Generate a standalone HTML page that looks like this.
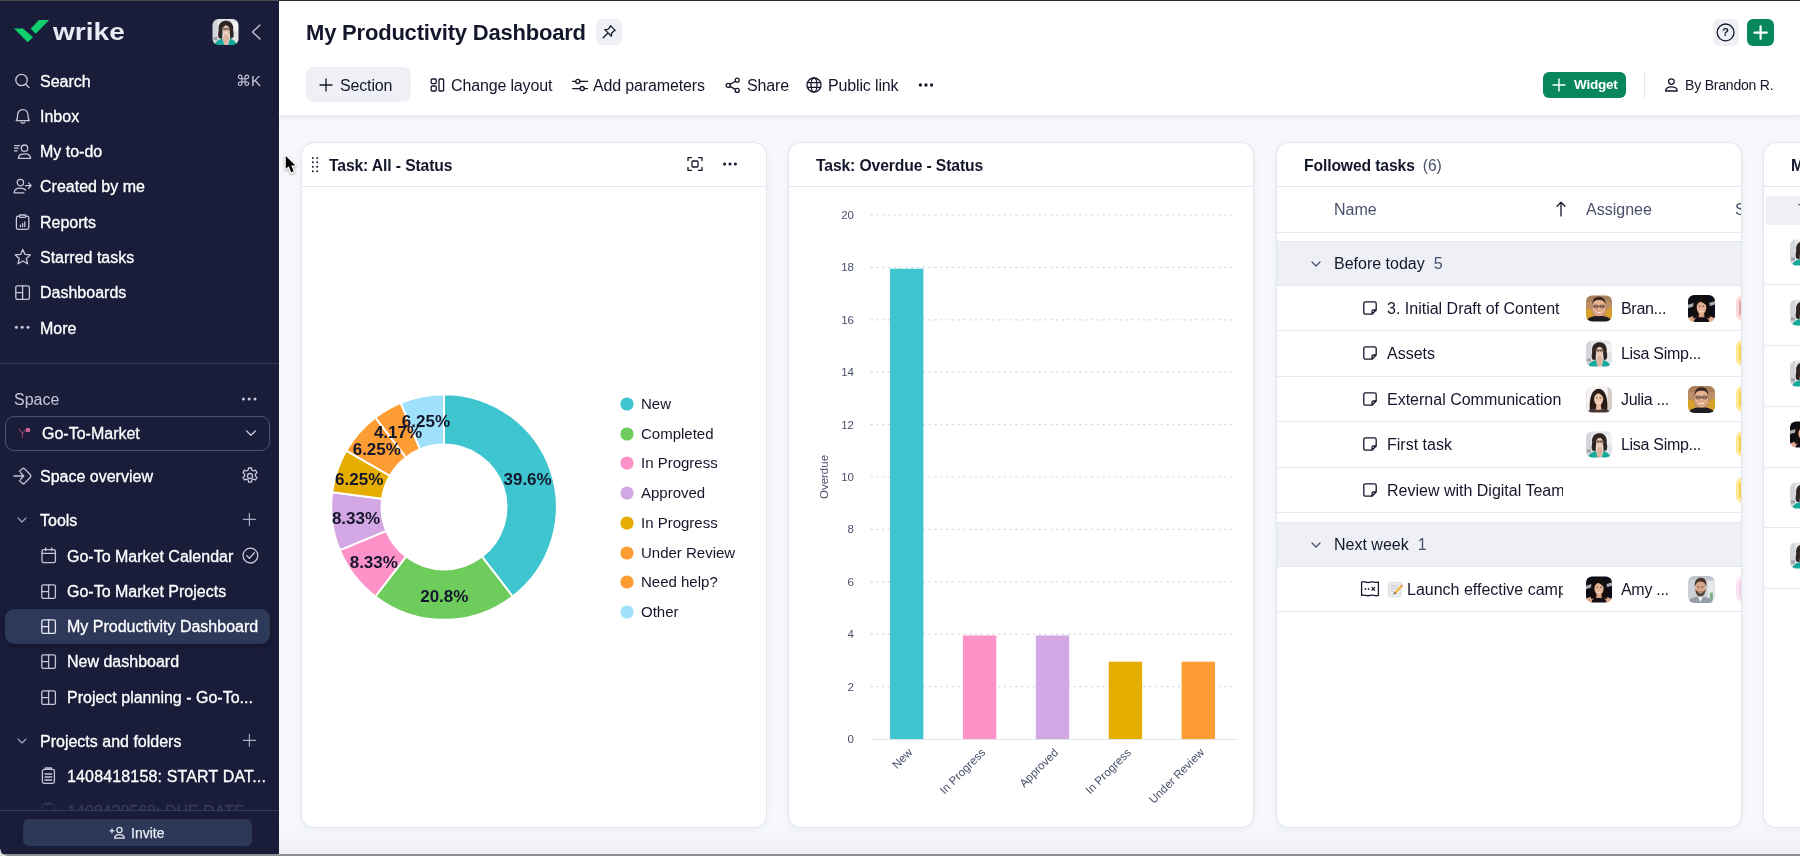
<!DOCTYPE html>
<html lang="en">
<head>
<meta charset="utf-8">
<title>My Productivity Dashboard - Wrike</title>
<style>
*{box-sizing:border-box;margin:0;padding:0}
html,body{width:1800px;height:856px;overflow:hidden;background:#f6f8fb;font-family:"Liberation Sans",sans-serif;color:#14162b}
.abs{position:absolute}
#topline{position:absolute;left:0;top:0;width:1800px;height:1px;background:linear-gradient(90deg,#4c4c52 279px,#2b2b2e 279px);z-index:50}
#botline{position:absolute;left:0;top:854px;width:1800px;height:2px;background:#8f8f93;z-index:50}
/* ---------- sidebar ---------- */
#side{position:absolute;left:0;top:0;width:279px;height:856px;background:#1a1d3a;color:#fff;overflow:hidden}
.nav{position:absolute;left:0;width:279px;height:24px;line-height:24px;font-size:16px;color:#fff;white-space:nowrap}
.nav .t{position:absolute;left:40px;top:1px;-webkit-text-stroke:.3px #fff}
.nav svg{position:absolute;left:13px;top:2px}
.sub .t{left:67px}
.sub svg{left:39px}
.ic{fill:none;stroke:#c3c7d8;stroke-width:1.3;stroke-linecap:round;stroke-linejoin:round}
.muted{color:#c3c7d8}
/* ---------- header ---------- */
#head{position:absolute;left:279px;top:0;width:1521px;height:115px;background:#fff;box-shadow:0 2px 6px rgba(50,75,110,.11);z-index:5}
#title{position:absolute;left:27px;top:19px;font-size:22px;font-weight:700;line-height:28px;color:#14162b;white-space:nowrap;letter-spacing:-.2px}
.tb{position:absolute;top:73.5px;height:24px;line-height:24px;font-size:16px;color:#14162b;white-space:nowrap;letter-spacing:-.15px}
.dk{fill:none;stroke:#14162b;stroke-width:1.3;stroke-linecap:round;stroke-linejoin:round}
/* ---------- cards ---------- */
.card{position:absolute;top:143px;height:684px;width:464px;background:#fff;border-radius:12px;box-shadow:0 0 0 1px #e1e6ee,0 2px 8px rgba(50,75,110,.07);overflow:hidden}
.card .hd{position:absolute;left:0;top:0;width:100%;height:44px;border-bottom:1px solid #e3e7ef}
.card .hd .tt{position:absolute;left:27px;top:12px;letter-spacing:-.12px;font-size:15.7px;font-weight:700;line-height:22px;white-space:nowrap;color:#14162b}

/* table */
.th{position:absolute;top:56px;font-size:16px;line-height:22px;color:#4a4f6b;white-space:nowrap}
.grp{position:absolute;left:0;width:464px;height:45px;background:#eef0f6;border-top:1px solid #e3e7ef;border-bottom:1px solid #e3e7ef}
.grp .g{position:absolute;left:57px;top:11px;font-size:16px;line-height:22px;color:#14162b;white-space:nowrap}
.grp .g i{font-style:normal;color:#4a4f6b;margin-left:9px}
.grp svg{position:absolute;left:32px;top:16px}
.row{position:absolute;left:0;width:464px;height:45.4px;border-bottom:1px solid #e6eaf1;font-size:16px;line-height:22px;color:#14162b;white-space:nowrap}
.row .nm{position:absolute;left:110px;top:12px;width:176px;overflow:hidden}
.row .ti{position:absolute;left:84px;top:13px}
.row .a1{position:absolute;left:309px;top:9px}
.row .an{position:absolute;left:344px;top:12px;letter-spacing:-.3px}
.row .a2{position:absolute;left:411px;top:9px}
.row .pill{position:absolute;left:459px;top:9px;width:30px;height:26px;border-radius:7px}
.row .pill b{position:absolute;left:3px;top:5px;width:20px;height:16px;border-radius:2px}
.r4{position:absolute;left:0;width:80px;height:60.8px;border-bottom:1px solid #e6eaf1}
.r4 svg{position:absolute;left:26px;top:14px}
</style>
</head>
<body><div id="wrap" style="position:absolute;left:0;top:0;width:1800px;height:856px;will-change:transform">
<div id="topline"></div>
<svg width="0" height="0" style="position:absolute">
 <defs>
  <filter id="sb" x="-10%" y="-10%" width="120%" height="120%"><feGaussianBlur stdDeviation="0.55"/></filter>
  <clipPath id="rc"><rect x="0" y="0" width="26" height="26" rx="6"/></clipPath>
  <symbol id="av-brandon" viewBox="0 0 26 26"><g clip-path="url(#rc)"><g filter="url(#sb)">
    <rect x="-2" y="-2" width="30" height="30" fill="#bd8f66"/>
    <rect x="-2" y="-2" width="30" height="8" fill="#a97f5c"/>
    <path d="M-1 14 C3 11.6 6 14 6.6 18 L7 27 H-1 Z" fill="#d6a02c"/><path d="M27 13 C23 11.6 20 14 19.4 18 L19 27 H27 Z" fill="#d6a02c"/>
    <path d="M0 27 C1 22 6 20.6 13 20.6 C20 20.6 25 22 26 27 Z" fill="#1b1a20"/>
    <ellipse cx="13" cy="12.2" rx="6.4" ry="8.6" fill="#e6b291"/>
    <ellipse cx="13" cy="16.5" rx="4.6" ry="3.6" fill="#dda485"/>
    <path d="M6.4 9.6 C6 3.4 9.4 1.2 13 1.2 C16.6 1.2 20 3.4 19.6 9.6 C18.8 5.8 16.6 4.6 13 4.6 C9.4 4.6 7.2 5.8 6.4 9.6 Z" fill="#3c2b21"/>
    <path d="M7.2 10.8 H18.8" stroke="#4a3a33" stroke-width=".8"/><rect x="7.8" y="9.6" width="4.2" height="2.8" rx="1.1" fill="none" stroke="#4a3a33" stroke-width=".7"/><rect x="14" y="9.6" width="4.2" height="2.8" rx="1.1" fill="none" stroke="#4a3a33" stroke-width=".7"/>
    <path d="M10.4 16.2 C11.6 17.4 14.4 17.4 15.6 16.2" stroke="#f6e9e2" stroke-width="1" fill="none"/>
  </g></g></symbol>
  <symbol id="av-amy" viewBox="0 0 26 26"><g clip-path="url(#rc)"><g filter="url(#sb)">
    <rect x="-2" y="-2" width="30" height="30" fill="#0f0e12"/>
    <path d="M-1 9.6 L5.4 7.6 L5.4 11 L-1 13 Z M20.6 7.4 L27 5.6 L27 9 L20.6 10.8 Z" fill="#a9a9b0"/>
    <path d="M-1 23 C2 20.6 5 20.2 8 20.2 L18 20.2 C21 20.2 24 21 27 23.4 V28 H-1 Z" fill="#dfa98b"/>
    <path d="M5.4 28 C5.4 22 9 20.8 13 20.8 C17 20.8 20.6 22 20.6 28 Z" fill="#121116"/>
    <path d="M5.2 22.6 C3.4 10 6.8 2 13 2 C19.2 2 22.6 10 20.8 22.6 L16 21.4 H10 Z" fill="#17110f"/>
    <path d="M10.6 17 H15.4 L15.8 21.4 H10.2 Z" fill="#d9a385"/>
    <ellipse cx="13" cy="12" rx="4.6" ry="6.4" fill="#e6b294"/>
    <path d="M8.2 10.4 C8.8 5.4 11.8 4.6 13.4 4.6 C15.8 4.6 17.8 6.4 17.9 10.4 C16 8 13.4 6.6 11.6 6.4 C10 7.2 9 8.6 8.2 10.4 Z" fill="#17110f"/>
    <path d="M10.8 15.2 C11.8 16.3 14.2 16.3 15.2 15.2" stroke="#f4e6df" stroke-width=".9" fill="none"/>
    <path d="M10.4 10.8 h1.6 M14 10.8 h1.6" stroke="#3a2620" stroke-width=".8"/>
  </g></g></symbol>
  <symbol id="av-lisa" viewBox="0 0 26 26"><g clip-path="url(#rc)"><g filter="url(#sb)">
    <rect x="-2" y="-2" width="30" height="30" fill="#e4e5e8"/>
    <rect x="-2" y="-2" width="7" height="30" fill="#d3d5da"/><rect x="20" y="3" width="8" height="9" fill="#f3f3f5"/><rect x="1" y="18" width="4" height="3" fill="#9fa3ab"/>
    <path d="M6.4 19 C4.6 15 6.8 12 6 9 C6.4 4 9.6 1.8 13.4 1.8 C17.4 1.8 20.6 4.4 20.8 9 C20.2 12 22.2 15 20.6 18.6 L17.8 20 L16.6 9 L10.4 8 L9.6 20 Z" fill="#2e2522"/>
    <path d="M12 14.6 H15.4 L17 20 L14.3 27 H12 L10.2 20 Z" fill="#ddb39d"/>
    <path d="M1.4 28 C2.4 22 6.4 20.6 9.8 19.8 L12.4 28 Z" fill="#17a899"/>
    <path d="M25 28 C24 22 20.6 20.6 17.4 19.8 L15 28 Z" fill="#17a899"/>
    <ellipse cx="13.6" cy="10.8" rx="3.7" ry="5.3" fill="#e9c4b0"/>
    <path d="M9.8 9.6 C10.2 5.2 12.2 4.2 13.6 4.2 C15.6 4.2 17.2 5.6 17.5 9.4 C16.4 7.4 15 6.4 13.4 6.2 C11.6 6.6 10.6 7.8 9.8 9.6 Z" fill="#2e2522"/>
    <path d="M10 10 H17.2" stroke="#4a3a34" stroke-width=".6"/><rect x="10.4" y="9" width="2.8" height="2.1" rx=".9" fill="none" stroke="#4a3a34" stroke-width=".55"/><rect x="14.2" y="9" width="2.8" height="2.1" rx=".9" fill="none" stroke="#4a3a34" stroke-width=".55"/>
    <path d="M12.2 13.4 C12.8 14 14.4 14 15 13.4" stroke="#f6ebe6" stroke-width=".7" fill="none"/>
  </g></g></symbol>
  <symbol id="av-julia" viewBox="0 0 26 26"><g clip-path="url(#rc)"><g filter="url(#sb)">
    <rect x="-2" y="-2" width="30" height="30" fill="#f5f4f3"/>
    <rect x="21.6" y="-2" width="7" height="30" fill="#d6cec6"/><rect x="-2" y="-2" width="3" height="30" fill="#e6e3e0"/>
    <path d="M4 25 C2.6 12 6 2.2 12.6 2.2 C19.2 2.2 22.6 12 21.2 25 L17 22.6 H8.6 Z" fill="#2b1d19"/>
    <path d="M0 28 C1 23.4 5.6 22 12.6 22 C19.6 22 24.2 23.4 25.2 28 Z" fill="#4a3936"/>
    <path d="M10.4 18 H14.8 L15.4 23.2 H9.8 Z" fill="#e7bda3"/>
    <ellipse cx="12.6" cy="12.4" rx="4.6" ry="6.4" fill="#edc5ab"/>
    <path d="M8 11.4 C8.2 6.2 10.6 4.8 13 4.8 C15.8 4.8 17.4 6.8 17.3 11.4 C16.2 8.6 14.4 7.2 12 6.8 C10.2 7.4 8.8 9 8 11.4 Z" fill="#2b1d19"/>
    <path d="M10.6 15.8 C11.6 16.8 13.8 16.8 14.8 15.8" stroke="#fbf3ee" stroke-width=".9" fill="none"/>
    <path d="M10 11.4 h1.6 M13.6 11.4 h1.6" stroke="#3a2822" stroke-width=".8"/>
  </g></g></symbol>
  <symbol id="av-man" viewBox="0 0 26 26"><g clip-path="url(#rc)"><g filter="url(#sb)">
    <rect x="-2" y="-2" width="30" height="30" fill="#cdd1d6"/>
    <rect x="19" y="5" width="9" height="23" fill="#e6e9ec"/><rect x="21" y="16" width="3" height="7" fill="#79b385"/><rect x="-2" y="-2" width="30" height="5" fill="#bfc4ca"/>
    <path d="M-1 28 C0 21 5.6 20 12 20 C18.4 20 24 21 25 28 Z" fill="#979da6"/>
    <path d="M9.4 19.4 H14.6 L12 25 Z" fill="#f4f5f7"/>
    <ellipse cx="12" cy="11.6" rx="5" ry="6.9" fill="#d9a689"/>
    <path d="M6.6 10.4 C5.8 4.2 9.2 1.8 12.6 1.8 C16.2 1.8 18.4 4.6 17.4 10.4 C16.6 7 14.8 5.4 12 5.4 C9.4 5.4 7.6 7 6.6 10.4 Z" fill="#46362d"/>
    <path d="M7 12.4 C7.4 17.8 9.6 19.8 12 19.8 C14.4 19.8 16.6 17.8 17 12.4 C15.8 14.8 14.2 15.2 12 15.2 C9.8 15.2 8.2 14.8 7 12.4 Z" fill="#59453a"/>
    <path d="M10.4 15.8 C11.2 16.5 12.8 16.5 13.6 15.8" stroke="#f6ebe5" stroke-width=".9" fill="none"/>
    <path d="M9.2 10.6 h1.8 M13 10.6 h1.8" stroke="#3a2a24" stroke-width=".8"/>
  </g></g></symbol>
  <symbol id="ic-task" viewBox="0 0 18 18"><path d="M4.6 2.8 H13.4 C14.4 2.8 15.2 3.6 15.2 4.6 V11 L11 15.2 H4.6 C3.6 15.2 2.8 14.4 2.8 13.4 V4.6 C2.8 3.6 3.6 2.8 4.6 2.8 Z M15.2 11 H12.4 C11.6 11 11 11.6 11 12.4 V15.2" fill="none" stroke="#14162b" stroke-width="1.3" stroke-linejoin="round"/></symbol>
 </defs>
</svg>


<!-- ================= SIDEBAR ================= -->
<div id="side">
  <!-- logo -->
  <svg class="abs" style="left:12px;top:18px" width="40" height="26" viewBox="12 18 40 26">
    <path d="M14 28.4 L22.9 28.4 L33.1 37.2 L27.6 42.2 Z" fill="#0fce6b"/>
    <path d="M38.9 20.1 L49.2 20.1 L35.8 33.7 L30.7 28.8 Z" fill="#0fce6b"/>
  </svg>
  <div class="abs" style="left:52.5px;top:15.5px;font-size:24px;font-weight:700;line-height:32px;color:#e8eaf4;transform:scaleX(1.17);transform-origin:0 0;letter-spacing:0">wrike</div>
  <!-- avatar -->
  <svg class="abs" style="left:212px;top:19px" width="27" height="26"><use href="#av-lisa" width="27" height="26"/></svg>
  <svg class="abs" style="left:248px;top:23px" width="16" height="18" viewBox="0 0 16 18"><path class="ic" d="M12 2 L4.5 9 L12 16" stroke-width="1.5"/></svg>

  <div class="nav" style="top:69px"><svg width="20" height="20" viewBox="0 0 20 20"><circle class="ic" cx="8.5" cy="9" r="5.7"/><path class="ic" d="M12.8 13.3 L16 16.6"/></svg><span class="t">Search</span><span class="abs muted" style="right:18px;top:0;font-size:15px">⌘K</span></div>
  <div class="nav" style="top:104px"><svg width="20" height="20" viewBox="0 0 20 20"><path class="ic" d="M3.2 14.6 C4.6 13 4.6 11.8 4.6 9.2 C4.6 6 6.6 3.6 9.8 3.6 C13 3.6 15 6 15 9.2 C15 11.8 15 13 16.4 14.6 Z"/><path class="ic" d="M8 16.2 C8.4 17.3 11.2 17.3 11.6 16.2"/></svg><span class="t">Inbox</span></div>
  <div class="nav" style="top:139px"><svg width="20" height="20" viewBox="0 0 20 20"><circle class="ic" cx="11.5" cy="7.2" r="3.2"/><path class="ic" d="M5.4 17.4 C5.4 14 7.6 12.8 11.5 12.8 C15.4 12.8 17.6 14 17.6 17.4 Z"/><path class="ic" d="M1.6 4.6 h5 M1.6 7.2 h3.6 M1.6 9.8 h2.6"/></svg><span class="t">My to-do</span></div>
  <div class="nav" style="top:174px"><svg width="20" height="20" viewBox="0 0 20 20"><circle class="ic" cx="7.4" cy="6.6" r="3.2"/><path class="ic" d="M1.2 16.8 C1.2 13.4 3.4 12.2 7.4 12.2 C10 12.2 11.6 12.8 12.6 14 M1.2 16.8 H11"/><path class="ic" d="M12.4 9.6 H18 M15.6 7 L18.2 9.6 L15.6 12.2"/></svg><span class="t">Created by me</span></div>
  <div class="nav" style="top:210px"><svg width="20" height="20" viewBox="0 0 20 20"><rect class="ic" x="3.4" y="4.2" width="12.4" height="13.2" rx="1.8"/><rect class="ic" x="6.4" y="3" width="6.4" height="2.4" rx=".8" fill="#1a1d3a" style="fill:#1a1d3a"/><path class="ic" d="M7.4 14.6 V13.2 M9.6 14.6 V11.6 M11.8 14.6 V9.8"/></svg><span class="t">Reports</span></div>
  <div class="nav" style="top:245px"><svg width="20" height="20" viewBox="0 0 20 20"><path class="ic" d="M9.8 2.4 L12 7.4 L17.4 7.9 L13.3 11.5 L14.6 16.8 L9.8 14 L5 16.8 L6.3 11.5 L2.2 7.9 L7.6 7.4 Z"/></svg><span class="t">Starred tasks</span></div>
  <div class="nav" style="top:280px"><svg width="20" height="20" viewBox="0 0 20 20"><rect class="ic" x="2.8" y="3.8" width="13.6" height="13.6" rx="1.6"/><path class="ic" d="M9.6 3.8 V17.4 M2.8 10.6 H9.6"/></svg><span class="t">Dashboards</span></div>
  <div class="nav" style="top:316px"><svg width="20" height="20" viewBox="0 0 20 20"><circle cx="3.4" cy="9.2" r="1.55" fill="#c3c7d8"/><circle cx="9.2" cy="9.2" r="1.55" fill="#c3c7d8"/><circle cx="15" cy="9.2" r="1.55" fill="#c3c7d8"/></svg><span class="t">More</span></div>

  <div class="abs" style="left:0;top:363px;width:279px;height:1px;background:#333a5c"></div>

  <div class="abs muted" style="left:14px;top:388px;font-size:16px;line-height:24px">Space</div>
  <svg class="abs" style="left:240px;top:392px" width="20" height="14" viewBox="0 0 20 14"><circle cx="3.4" cy="7" r="1.5" fill="#c3c7d8"/><circle cx="9.2" cy="7" r="1.5" fill="#c3c7d8"/><circle cx="15" cy="7" r="1.5" fill="#c3c7d8"/></svg>

  <div class="abs" style="left:5px;top:416px;width:265px;height:35px;border:1px solid #4b5173;border-radius:9px"></div>
  <svg class="abs" style="left:16px;top:425px" width="18" height="16" viewBox="0 0 18 16"><path d="M3 4 L6.4 8.4 L6.4 12.6 M6.4 8.4 L9.6 5" fill="none" stroke="#8e3a66" stroke-width="1.2" stroke-linecap="round"/><circle cx="12" cy="5" r="2.3" fill="#d0669c"/></svg>
  <div class="abs" style="left:42px;top:422px;font-size:16px;line-height:24px;color:#fff;-webkit-text-stroke:.3px #fff">Go-To-Market</div>
  <svg class="abs" style="left:244px;top:427px" width="14" height="12" viewBox="0 0 14 12"><path class="ic" d="M2.6 4 L7 8.2 L11.4 4"/></svg>

  <div class="nav" style="top:464px"><svg width="20" height="20" viewBox="0 0 20 20"><path class="ic" d="M1 10 H10.6 M7.6 6.8 L10.8 10 L7.6 13.2"/><path class="ic" d="M6.4 5.4 L9.6 2.6 C10.2 2.1 10.8 2.1 11.4 2.6 L17.4 8.8 C18 9.6 18 10.4 17.4 11.2 L11.4 17.4 C10.8 17.9 10.2 17.9 9.6 17.4 L6.4 14.6"/></svg><span class="t">Space overview</span>
    <svg style="left:240px;top:2px" width="20" height="20" viewBox="0 0 20 20"><circle class="ic" cx="10" cy="10" r="2.5"/><path class="ic" d="M8.6 2 h2.8 l.5 2.2 1.5 .8 2.1 -.8 1.5 2.4 -1.7 1.6 v1.7 l1.7 1.6 -1.5 2.4 -2.1 -.8 -1.5 .8 -.5 2.2 h-2.8 l-.5 -2.2 -1.5 -.8 -2.1 .8 -1.5 -2.4 1.7 -1.6 v-1.7 l-1.7 -1.6 1.5 -2.4 2.1 .8 1.5 -.8 z"/></svg></div>

  <div class="nav" style="top:508px"><svg style="left:15px;top:6px" width="14" height="12" viewBox="0 0 14 12"><path class="ic" d="M3 4 L7 8 L11 4" style="stroke:#a4a9c0;stroke-width:1.1"/></svg><span class="t">Tools</span><svg style="left:240px;top:2px" width="20" height="20" viewBox="0 0 20 20"><path class="ic" d="M9.4 3.4 V15.4 M3.4 9.4 H15.4" style="stroke:#a9aec4;stroke-width:1.15"/></svg></div>

  <div class="nav sub" style="top:544px"><svg width="20" height="20" viewBox="0 0 20 20"><rect class="ic" x="3" y="3.6" width="13.4" height="13" rx="1.6"/><path class="ic" d="M3 7.4 H16.4 M6.6 1.8 V4.6 M12.8 1.8 V4.6"/></svg><span class="t">Go-To Market Calendar</span><svg style="left:241px;top:2px" width="20" height="20" viewBox="0 0 20 20"><circle class="ic" cx="9.4" cy="9.6" r="7.4"/><path class="ic" d="M5.8 9.8 L8.4 12.4 L13.4 6.8"/></svg></div>
  <div class="nav sub" style="top:579px"><svg width="20" height="20" viewBox="0 0 20 20"><rect class="ic" x="2.8" y="3.8" width="13.6" height="13.6" rx="1.6"/><path class="ic" d="M9.6 3.8 V17.4 M2.8 10.6 H9.6"/></svg><span class="t">Go-To Market Projects</span></div>
  <div class="abs" style="left:5px;top:609px;width:265px;height:35px;border-radius:9px;background:#2e3859;box-shadow:0 2px 6px rgba(0,0,0,.35)"></div>
  <div class="nav sub" style="top:614px"><svg width="20" height="20" viewBox="0 0 20 20"><rect class="ic" x="2.8" y="3.8" width="13.6" height="13.6" rx="1.6" style="stroke:#e6e8f2"/><path class="ic" d="M9.6 3.8 V17.4 M2.8 10.6 H9.6" style="stroke:#e6e8f2"/></svg><span class="t">My Productivity Dashboard</span></div>
  <div class="nav sub" style="top:649px"><svg width="20" height="20" viewBox="0 0 20 20"><rect class="ic" x="2.8" y="3.8" width="13.6" height="13.6" rx="1.6"/><path class="ic" d="M9.6 3.8 V17.4 M2.8 10.6 H9.6"/></svg><span class="t">New dashboard</span></div>
  <div class="nav sub" style="top:685px"><svg width="20" height="20" viewBox="0 0 20 20"><rect class="ic" x="2.8" y="3.8" width="13.6" height="13.6" rx="1.6"/><path class="ic" d="M9.6 3.8 V17.4 M2.8 10.6 H9.6"/></svg><span class="t">Project planning - Go-To...</span></div>

  <div class="nav" style="top:729px"><svg style="left:15px;top:6px" width="14" height="12" viewBox="0 0 14 12"><path class="ic" d="M3 4 L7 8 L11 4" style="stroke:#a4a9c0;stroke-width:1.1"/></svg><span class="t">Projects and folders</span><svg style="left:240px;top:2px" width="20" height="20" viewBox="0 0 20 20"><path class="ic" d="M9.4 3.4 V15.4 M3.4 9.4 H15.4" style="stroke:#a9aec4;stroke-width:1.15"/></svg></div>
  <div class="nav sub" style="top:764px"><svg width="20" height="20" viewBox="0 0 20 20"><rect class="ic" x="3.4" y="3.4" width="12" height="14" rx="1.8"/><path class="ic" d="M6.4 3.4 V2 H12.4 V3.4 M6 8 H12.8 M6 11 H12.8 M6 14 H12.8"/></svg><span class="t" style="letter-spacing:.15px">1408418158: START DAT...</span></div>
  <div class="nav sub" style="top:799px;opacity:.12"><svg width="20" height="20" viewBox="0 0 20 20"><rect class="ic" x="3.4" y="3.4" width="12" height="14" rx="1.8"/><path class="ic" d="M6.4 3.4 V2 H12.4 V3.4"/></svg><span class="t">1408420568: DUE DATE...</span></div>

  <!-- footer -->
  <div class="abs" style="left:0;top:810px;width:279px;height:46px;background:#1a1d3a;border-top:1px solid #333a5c"></div>
  <div class="abs" style="left:23px;top:819px;width:229px;height:27px;border-radius:6px;background:#2d3757"></div>
  <svg class="abs" style="left:109px;top:824px" width="18" height="18" viewBox="0 0 18 18"><path class="ic" d="M1 6.8 H5 M3 4.8 V8.8" style="stroke:#e3e5ee"/><circle class="ic" cx="10.4" cy="6" r="2.6" style="stroke:#e3e5ee"/><path class="ic" d="M5.6 14.2 C5.6 11.6 7.4 10.6 10.4 10.6 C13.4 10.6 15.2 11.6 15.2 14.2 Z" style="stroke:#e3e5ee"/></svg>
  <div class="abs" style="left:131px;top:822.5px;font-size:14px;line-height:20px;color:#e9ebf3;-webkit-text-stroke:.25px #e9ebf3">Invite</div>
</div>

<!-- ================= HEADER ================= -->
<div id="head">

  <div id="title">My Productivity Dashboard</div>
  <!-- pin -->
  <div class="abs" style="left:317px;top:19px;width:26px;height:26px;border-radius:6px;background:#eef0f6"></div>
  <svg class="abs" style="left:321px;top:23px" width="18" height="18" viewBox="0 0 18 18"><path class="dk" d="M10.4 2.6 L15.2 7.4 L13.8 8 L11.6 10.2 L11.4 13.2 L4.8 6.6 L7.8 6.4 L10 4.2 Z M8 10 L3.2 14.8" stroke-width="1.2"/></svg>

  <!-- toolbar -->
  <div class="abs" style="left:27px;top:67px;width:105px;height:35px;border-radius:8px;background:#eef0f6"></div>
  <svg class="abs" style="left:39px;top:77px" width="16" height="16" viewBox="0 0 16 16"><path class="dk" d="M8 2 V14 M2 8 H14"/></svg>
  <div class="tb" style="left:61px">Section</div>

  <svg class="abs" style="left:150px;top:76px" width="18" height="18" viewBox="0 0 18 18"><rect class="dk" x="2.2" y="3" width="5" height="4.6" rx="1"/><rect class="dk" x="2.2" y="10" width="5" height="5" rx="1"/><rect class="dk" x="10" y="3" width="4.6" height="12" rx="1"/></svg>
  <div class="tb" style="left:172px">Change layout</div>

  <svg class="abs" style="left:292px;top:76px" width="18" height="18" viewBox="0 0 18 18"><path class="dk" d="M1.6 5.4 H4.6 M9 5.4 H16.4 M1.6 12.6 H9 M13.4 12.6 H16.4"/><circle class="dk" cx="6.8" cy="5.4" r="2.1"/><circle class="dk" cx="11.2" cy="12.6" r="2.1"/></svg>
  <div class="tb" style="left:314px">Add parameters</div>

  <svg class="abs" style="left:445px;top:76px" width="18" height="18" viewBox="0 0 18 18"><circle class="dk" cx="4.2" cy="9.4" r="2"/><circle class="dk" cx="13.2" cy="4.2" r="2"/><circle class="dk" cx="13.2" cy="14.4" r="2"/><path class="dk" d="M6 8.4 L11.4 5.2 M6 10.4 L11.4 13.4"/></svg>
  <div class="tb" style="left:468px">Share</div>

  <svg class="abs" style="left:526px;top:76px" width="18" height="18" viewBox="0 0 18 18"><circle class="dk" cx="9" cy="9" r="7"/><ellipse class="dk" cx="9" cy="9" rx="3" ry="7"/><path class="dk" d="M2.4 6.6 H15.6 M2.4 11.4 H15.6"/></svg>
  <div class="tb" style="left:549px">Public link</div>

  <svg class="abs" style="left:638px;top:77.5px" width="20" height="14" viewBox="0 0 20 14"><circle cx="3.4" cy="7" r="1.65" fill="#14162b"/><circle cx="9" cy="7" r="1.65" fill="#14162b"/><circle cx="14.6" cy="7" r="1.65" fill="#14162b"/></svg>

  <!-- right -->
  <div class="abs" style="left:1434px;top:19px;width:26px;height:27px;border-radius:6px;background:#eef0f6"></div>
  <svg class="abs" style="left:1436px;top:22px" width="22" height="22" viewBox="0 0 22 22"><circle class="dk" cx="10.6" cy="10.4" r="8.4" stroke-width="1.4"/><text x="10.6" y="14.4" text-anchor="middle" font-family="Liberation Sans, sans-serif" font-size="11.5" font-weight="700" fill="#14162b">?</text></svg>
  <div class="abs" style="left:1468px;top:19px;width:27px;height:27px;border-radius:6px;background:#08875e"></div>
  <svg class="abs" style="left:1472px;top:23px" width="20" height="20" viewBox="0 0 20 20"><path d="M9.6 3.4 V15.8 M3.4 9.6 H15.8" stroke="#fff" stroke-width="2.2" stroke-linecap="round" fill="none"/></svg>

  <div class="abs" style="left:1264px;top:72px;width:83px;height:26px;border-radius:6px;background:#08875e"></div>
  <svg class="abs" style="left:1273px;top:78px" width="14" height="14" viewBox="0 0 14 14"><path d="M7 1 V13 M1 7 H13" stroke="#fff" stroke-width="1.4" stroke-linecap="round" fill="none"/></svg>
  <div class="abs" style="left:1295px;top:75px;font-size:13.5px;line-height:20px;font-weight:700;color:#fff;letter-spacing:-.2px">Widget</div>
  <div class="abs" style="left:1365px;top:72px;width:1px;height:26px;background:#e3e6ee"></div>
  <svg class="abs" style="left:1384px;top:76px" width="18" height="18" viewBox="0 0 18 18"><circle class="dk" cx="8.4" cy="5.6" r="2.8"/><path class="dk" d="M2.6 15 C2.6 12 4.8 10.8 8.4 10.8 C12 10.8 14.2 12 14.2 15 Z"/></svg>
  <div class="abs" style="left:1406px;top:75px;font-size:14px;line-height:20px;color:#14162b;white-space:nowrap;letter-spacing:-.2px">By Brandon R.</div>
</div>

<!-- ================= CARDS ================= -->
<div class="card" id="c1" style="left:302px">

  <div class="hd"><div class="tt">Task: All - Status</div>
    <svg class="abs" style="left:9px;top:13px" width="10" height="18" viewBox="0 0 10 18"><g fill="#14162b"><circle cx="1.8" cy="1.9" r=".95"/><circle cx="6.2" cy="1.9" r=".95"/><circle cx="1.8" cy="6.3" r=".95"/><circle cx="6.2" cy="6.3" r=".95"/><circle cx="1.8" cy="10.7" r=".95"/><circle cx="6.2" cy="10.7" r=".95"/><circle cx="1.8" cy="15.2" r=".95"/><circle cx="6.2" cy="15.2" r=".95"/></g></svg>
    <svg class="abs" style="left:384px;top:12px" width="20" height="20" viewBox="0 0 20 20"><path class="dk" d="M2 5.6 V2.6 H5.4 M12.6 2.6 H16 V5.6 M16 12.4 V15.4 H12.6 M5.4 15.4 H2 V12.4" stroke-width="1.3"/><rect class="dk" x="6" y="6" width="6" height="6" rx="1" stroke-width="1.3"/></svg>
    <svg class="abs" style="left:419px;top:14px" width="20" height="14" viewBox="0 0 20 14"><circle cx="3.6" cy="7" r="1.5" fill="#14162b"/><circle cx="9" cy="7" r="1.5" fill="#14162b"/><circle cx="14.4" cy="7" r="1.5" fill="#14162b"/></svg>
  </div>
  <svg class="abs" style="left:0;top:0" width="464" height="684" viewBox="0 0 464 684">
    <path d="M142.00 251.20 A112.8 112.8 0 0 1 210.67 453.49 L180.05 413.58 A62.5 62.5 0 0 0 142.00 301.50 Z" fill="#3ec5d0" stroke="#fff" stroke-width="2" stroke-linejoin="round"/>
    <path d="M210.67 453.49 A112.8 112.8 0 0 1 73.33 453.49 L103.95 413.58 A62.5 62.5 0 0 0 180.05 413.58 Z" fill="#6dcc5c" stroke="#fff" stroke-width="2" stroke-linejoin="round"/>
    <path d="M73.33 453.49 A112.8 112.8 0 0 1 37.79 407.17 L84.26 387.92 A62.5 62.5 0 0 0 103.95 413.58 Z" fill="#fd92c8" stroke="#fff" stroke-width="2" stroke-linejoin="round"/>
    <path d="M37.79 407.17 A112.8 112.8 0 0 1 30.17 349.28 L80.03 355.84 A62.5 62.5 0 0 0 84.26 387.92 Z" fill="#d3a6e4" stroke="#fff" stroke-width="2" stroke-linejoin="round"/>
    <path d="M30.17 349.28 A112.8 112.8 0 0 1 44.31 307.60 L87.87 332.75 A62.5 62.5 0 0 0 80.03 355.84 Z" fill="#e5ad00" stroke="#fff" stroke-width="2" stroke-linejoin="round"/>
    <path d="M44.31 307.60 A112.8 112.8 0 0 1 73.33 274.51 L103.95 314.42 A62.5 62.5 0 0 0 87.87 332.75 Z" fill="#fd9d34" stroke="#fff" stroke-width="2" stroke-linejoin="round"/>
    <path d="M73.33 274.51 A112.8 112.8 0 0 1 98.83 259.79 L118.08 306.26 A62.5 62.5 0 0 0 103.95 314.42 Z" fill="#fd9d34" stroke="#fff" stroke-width="2" stroke-linejoin="round"/>
    <path d="M98.83 259.79 A112.8 112.8 0 0 1 142.00 251.20 L142.00 301.50 A62.5 62.5 0 0 0 118.08 306.26 Z" fill="#9fe1fb" stroke="#fff" stroke-width="2" stroke-linejoin="round"/>
    <g font-family="Liberation Sans, sans-serif" font-size="17" font-weight="700" fill="#14162b" text-anchor="middle"><text x="225.6" y="341.9">39.6%</text><text x="142.3" y="458.7">20.8%</text><text x="71.8" y="424.6">8.33%</text><text x="54.0" y="380.7">8.33%</text><text x="57.2" y="342.2">6.25%</text><text x="74.8" y="312.0">6.25%</text><text x="96.0" y="294.6">4.17%</text><text x="123.9" y="284.2">6.25%</text></g>
    <g font-family="Liberation Sans, sans-serif" font-size="15" fill="#14162b"><circle cx="325" cy="261" r="6.6" fill="#3ec5d0"/><text x="339" y="266.2">New</text><circle cx="325" cy="291" r="6.6" fill="#6dcc5c"/><text x="339" y="296.2">Completed</text><circle cx="325" cy="320" r="6.6" fill="#fd92c8"/><text x="339" y="325.2">In Progress</text><circle cx="325" cy="350" r="6.6" fill="#d3a6e4"/><text x="339" y="355.2">Approved</text><circle cx="325" cy="380" r="6.6" fill="#e5ad00"/><text x="339" y="385.2">In Progress</text><circle cx="325" cy="410" r="6.6" fill="#fd9d34"/><text x="339" y="415.2">Under Review</text><circle cx="325" cy="439" r="6.6" fill="#fd9d34"/><text x="339" y="444.2">Need help?</text><circle cx="325" cy="469" r="6.6" fill="#9fe1fb"/><text x="339" y="474.2">Other</text></g>
  </svg>
</div>
<div class="card" id="c2" style="left:789px">

  <div class="hd"><div class="tt">Task: Overdue - Status</div></div>
  <svg class="abs" style="left:0;top:0" width="464" height="684" viewBox="0 0 464 684">
    <path d="M82 543.6 H444" stroke="#d5d8e0" stroke-width="1.2" stroke-dasharray="1.2 4.6" stroke-linecap="round" fill="none"/><path d="M82 491.2 H444" stroke="#d5d8e0" stroke-width="1.2" stroke-dasharray="1.2 4.6" stroke-linecap="round" fill="none"/><path d="M82 438.8 H444" stroke="#d5d8e0" stroke-width="1.2" stroke-dasharray="1.2 4.6" stroke-linecap="round" fill="none"/><path d="M82 386.4 H444" stroke="#d5d8e0" stroke-width="1.2" stroke-dasharray="1.2 4.6" stroke-linecap="round" fill="none"/><path d="M82 334.0 H444" stroke="#d5d8e0" stroke-width="1.2" stroke-dasharray="1.2 4.6" stroke-linecap="round" fill="none"/><path d="M82 281.6 H444" stroke="#d5d8e0" stroke-width="1.2" stroke-dasharray="1.2 4.6" stroke-linecap="round" fill="none"/><path d="M82 229.2 H444" stroke="#d5d8e0" stroke-width="1.2" stroke-dasharray="1.2 4.6" stroke-linecap="round" fill="none"/><path d="M82 176.8 H444" stroke="#d5d8e0" stroke-width="1.2" stroke-dasharray="1.2 4.6" stroke-linecap="round" fill="none"/><path d="M82 124.4 H444" stroke="#d5d8e0" stroke-width="1.2" stroke-dasharray="1.2 4.6" stroke-linecap="round" fill="none"/><path d="M82 72.0 H444" stroke="#d5d8e0" stroke-width="1.2" stroke-dasharray="1.2 4.6" stroke-linecap="round" fill="none"/>
    <rect x="101.0" y="125.7" width="33.4" height="470.3" fill="#3ec5d0"/><rect x="173.9" y="492.5" width="33.4" height="103.5" fill="#fd92c8"/><rect x="246.8" y="492.5" width="33.4" height="103.5" fill="#d3a6e4"/><rect x="319.7" y="518.7" width="33.4" height="77.3" fill="#e5ad00"/><rect x="392.6" y="518.7" width="33.4" height="77.3" fill="#fd9d34"/>
    <path d="M82 596.5 H447" stroke="#dfe3ea" stroke-width="1.2" fill="none"/>
    <g font-family="Liberation Sans, sans-serif" font-size="11.5" fill="#4a4f6b"><text x="65" y="600.0" text-anchor="end">0</text><text x="65" y="547.6" text-anchor="end">2</text><text x="65" y="495.2" text-anchor="end">4</text><text x="65" y="442.8" text-anchor="end">6</text><text x="65" y="390.4" text-anchor="end">8</text><text x="65" y="338.0" text-anchor="end">10</text><text x="65" y="285.6" text-anchor="end">12</text><text x="65" y="233.2" text-anchor="end">14</text><text x="65" y="180.8" text-anchor="end">16</text><text x="65" y="128.4" text-anchor="end">18</text><text x="65" y="76.0" text-anchor="end">20</text><text transform="translate(124.2 610.2) rotate(-45)" text-anchor="end">New</text><text transform="translate(197.1 610.2) rotate(-45)" text-anchor="end">In Progress</text><text transform="translate(270.0 610.2) rotate(-45)" text-anchor="end">Approved</text><text transform="translate(342.9 610.2) rotate(-45)" text-anchor="end">In Progress</text><text transform="translate(415.8 610.2) rotate(-45)" text-anchor="end">Under Review</text>
      <text transform="translate(39 334) rotate(-90)" text-anchor="middle" font-size="11.5">Overdue</text>
    </g>
  </svg>
</div>
<div class="card" id="c3" style="left:1277px">

  <div class="hd"><div class="tt">Followed tasks<span style="font-weight:400;color:#4a4f6b;margin-left:8px">(6)</span></div></div>
  <div class="th" style="left:57px">Name</div>
  <svg class="abs" style="left:276px;top:57px" width="16" height="18" viewBox="0 0 16 18"><path class="dk" d="M8 16 V2.6 M4 6.2 L8 2.2 L12 6.2" stroke-width="1.1"/></svg>
  <div class="th" style="left:309px">Assignee</div>
  <div class="th" style="left:458px">S</div>
  <div class="abs" style="left:0;top:89px;width:464px;height:1px;background:#e6eaf1"></div>
  <div class="grp" style="top:98px"><svg width="14" height="12" viewBox="0 0 14 12"><path class="dk" d="M3 4 L7 8 L11 4" stroke-width=".95" style="stroke:#4a4f6b"/></svg><div class="g">Before today<i>5</i></div></div>
<div class="row" style="top:143px"><svg class="ti" width="18" height="18"><use href="#ic-task"/></svg><div class="nm">3. Initial Draft of Content</div><svg class="a1" width="26" height="27"><use href="#av-brandon" width="26" height="27"/></svg><div class="an">Bran...</div><svg class="a2" width="27" height="27"><use href="#av-amy" width="27" height="27"/></svg><div class="pill" style="background:#fbdcdc"><b style="background:#eaa3a3"></b></div></div><div class="row" style="top:188.4px"><svg class="ti" width="18" height="18"><use href="#ic-task"/></svg><div class="nm">Assets</div><svg class="a1" width="26" height="27"><use href="#av-lisa" width="26" height="27"/></svg><div class="an">Lisa Simp...</div><div class="pill" style="background:#ffe892"><b style="background:#f7d24a"></b></div></div><div class="row" style="top:233.8px"><svg class="ti" width="18" height="18"><use href="#ic-task"/></svg><div class="nm">External Communication</div><svg class="a1" width="26" height="27"><use href="#av-julia" width="26" height="27"/></svg><div class="an">Julia ...</div><svg class="a2" width="27" height="27"><use href="#av-brandon" width="27" height="27"/></svg><div class="pill" style="background:#ffe892"><b style="background:#f7d24a"></b></div></div><div class="row" style="top:279.2px"><svg class="ti" width="18" height="18"><use href="#ic-task"/></svg><div class="nm">First task</div><svg class="a1" width="26" height="27"><use href="#av-lisa" width="26" height="27"/></svg><div class="an">Lisa Simp...</div><div class="pill" style="background:#ffe892"><b style="background:#f7d24a"></b></div></div><div class="row" style="top:324.6px"><svg class="ti" width="18" height="18"><use href="#ic-task"/></svg><div class="nm">Review with Digital Team</div><div class="pill" style="background:#ffe892"><b style="background:#f7d24a"></b></div></div>
  <div class="grp" style="top:379px"><svg width="14" height="12" viewBox="0 0 14 12"><path class="dk" d="M3 4 L7 8 L11 4" stroke-width=".95" style="stroke:#4a4f6b"/></svg><div class="g">Next week<i>1</i></div></div>
<div class="row" style="top:424px"><svg class="ti" style="left:82px;top:12px" width="22" height="20" viewBox="0 0 22 20"><path d="M2.6 3 C5.6 1.6 8 4.6 11 3.2 C14 1.8 16.4 4.6 19.4 3 V16.4 C16.4 18 14 15 11 16.4 C8 17.8 5.6 15 2.6 16.4 Z" fill="none" stroke="#14162b" stroke-width="1.3" stroke-linejoin="round"/><circle cx="6.4" cy="10" r=".9" fill="#14162b"/><circle cx="9.6" cy="10" r=".9" fill="#14162b"/><path d="M12.6 8.2 L16 11.6 M16 8.2 L12.6 11.6" stroke="#14162b" stroke-width="1.2"/></svg><div class="nm"><svg style="display:inline-block;vertical-align:-3px;margin-right:3px" width="17" height="17" viewBox="0 0 17 17"><rect x="1.4" y="1.4" width="12.6" height="14.4" rx="1" fill="#e9ebef" stroke="#c9ccd4" stroke-width=".6"/><path d="M3.6 5 H11 M3.6 7.6 H9 M3.6 10.2 H7" stroke="#b3b7c2" stroke-width=".8"/><path d="M14.6 3.4 L16.2 5 L9 12.4 L6.6 13.4 L7.6 11 Z" fill="#f2b632"/><path d="M6.6 13.4 L7.6 11 L9 12.4 Z" fill="#3a3a3a"/><path d="M14.6 3.4 L16.2 5 L15.2 6 L13.6 4.4 Z" fill="#e77f9a"/></svg>Launch effective campaign</div><svg class="a1" width="26" height="27"><use href="#av-amy" width="26" height="27"/></svg><div class="an">Amy ...</div><svg class="a2" width="27" height="27"><use href="#av-man" width="27" height="27"/></svg><div class="pill" style="background:#fbe4f4"><b style="background:#f6cfe9"></b></div></div></div>
<div class="card" id="c4" style="left:1764px;width:80px;border-radius:12px 0 0 12px">

  <div class="hd"><div class="tt">M</div></div>
  <div class="abs" style="left:2px;top:53px;width:80px;height:29px;background:#eef0f6"></div>
  <div class="abs" style="left:34px;top:58px;font-size:14px;color:#4a4f6b">T</div>
<div class="r4" style="top:81.5px"><svg width="26" height="27"><use href="#av-lisa" width="26" height="27"/></svg></div><div class="r4" style="top:142.3px"><svg width="26" height="27"><use href="#av-lisa" width="26" height="27"/></svg></div><div class="r4" style="top:203px"><svg width="26" height="27"><use href="#av-lisa" width="26" height="27"/></svg></div><div class="r4" style="top:263.8px"><svg width="26" height="27"><use href="#av-amy" width="26" height="27"/></svg></div><div class="r4" style="top:324.6px"><svg width="26" height="27"><use href="#av-lisa" width="26" height="27"/></svg></div><div class="r4" style="top:385.4px"><svg width="26" height="27"><use href="#av-lisa" width="26" height="27"/></svg></div></div>


<div class="abs" style="left:279px;top:828px;width:1521px;height:26px;background:linear-gradient(rgba(246,248,251,0),#eef0f4);z-index:1"></div>
<svg class="abs" style="left:280px;top:150px;z-index:60" width="24" height="30" viewBox="280 150 24 30">
  <g style="filter:drop-shadow(0 1px 1.2px rgba(0,0,0,.35))"><path d="M285.8 156 V168.8 L288.7 166.2 L291.2 172.2 L293.7 171.2 L291.2 165.4 H295.4 Z" fill="#fff" stroke="#fff" stroke-width="2.6" stroke-linejoin="round"/></g>
  <path d="M285.8 156 V168.8 L288.7 166.2 L291.2 172.2 L293.7 171.2 L291.2 165.4 H295.4 Z" fill="#000"/>
</svg>
<div class="abs" style="left:0;top:849px;width:7px;height:7px;z-index:55;background:radial-gradient(circle at 100% 0,rgba(0,0,0,0) 6.2px,#d9d9dc 6.9px)"></div>
<div id="botline"></div>
</div></body>
</html>
